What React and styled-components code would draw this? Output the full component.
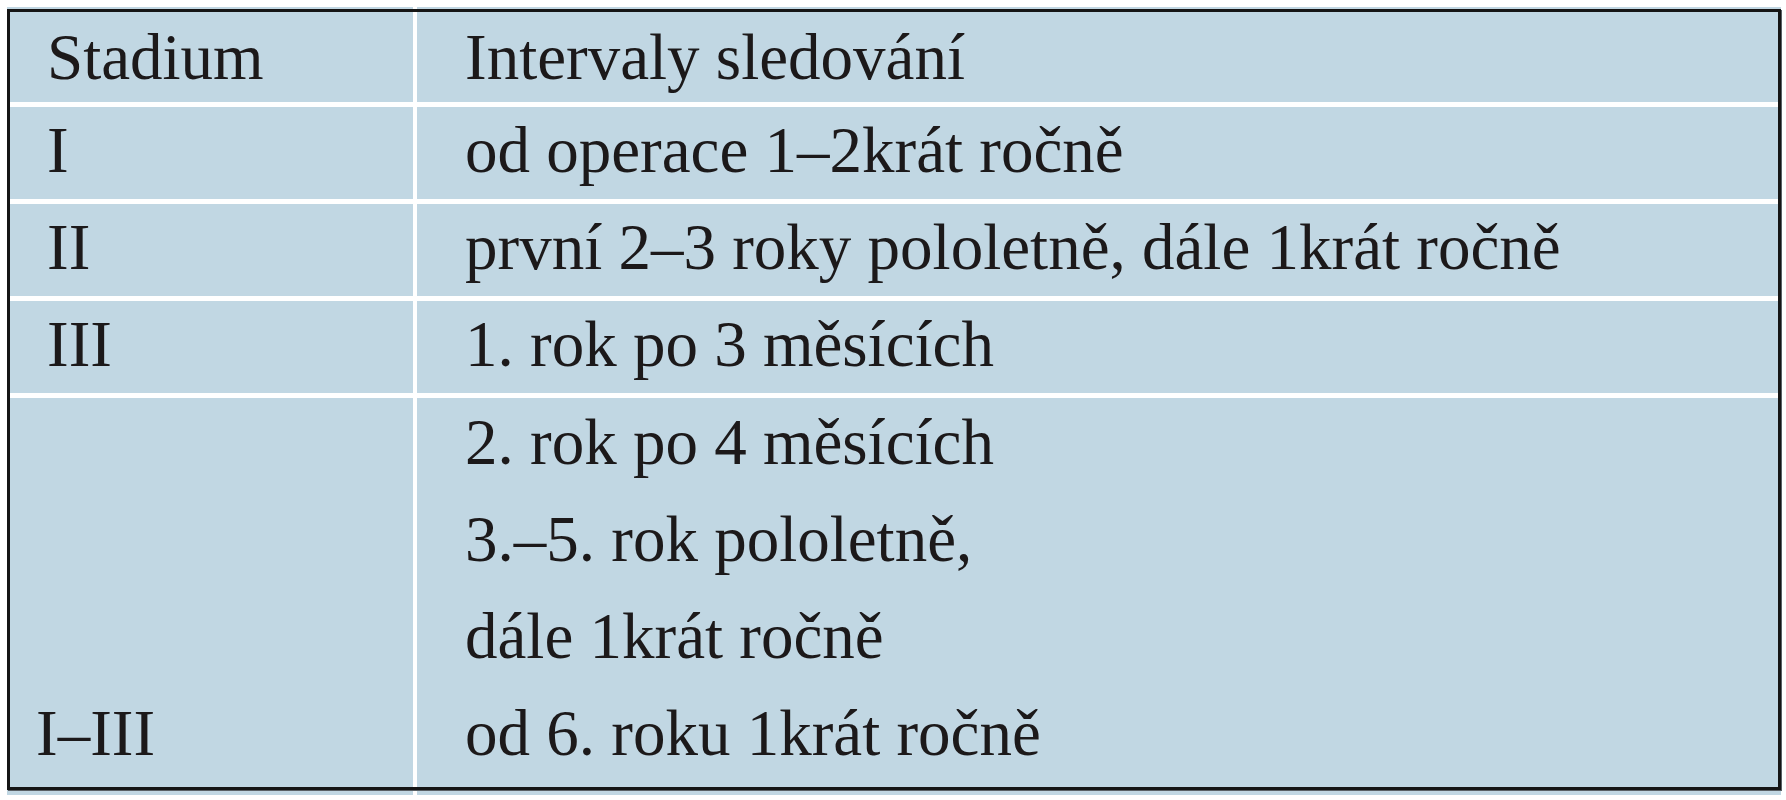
import React from 'react';
import styled, { createGlobalStyle } from 'styled-components';

const Global = createGlobalStyle`
  html, body {
    margin: 0;
    padding: 0;
    background: #ffffff;
  }
`;

const Frame = styled.div`
  margin: 7px 0 0 7px;
  width: 1774px;
  background: linear-gradient(
    to right,
    #c1d7e3 406px,
    #ffffff 406px,
    #ffffff 410px,
    #c1d7e3 410px
  );
  padding: 2px 0 5px;
`;

const Table = styled.div`
  display: grid;
  grid-template-columns: 403px 1fr;
  column-gap: 4px;
  background: #ffffff;
  border: 3px solid #151515;
  box-shadow: 1px 1px 0 #5a6166;
  font-family: "Liberation Serif", "Times New Roman", serif;
  font-size: 65px;
  line-height: 86px;
  color: #1c191a;
`;

const kinds = {
  head: { pt: 2, pb: 2, gap: 5 },
  row: { pt: 0, pb: 6, gap: 5 },
  line: { pt: 1, pb: 10, gap: 0 },
  last: { pt: 1, pb: 11, gap: 0 },
};

const Cell = styled.div`
  background: #c1d7e3;
  white-space: nowrap;
  padding: ${(p) => kinds[p.$kind].pt}px 0 ${(p) => kinds[p.$kind].pb}px
    ${(p) => (p.$side === 'left' ? p.$indent ?? 37 : 48)}px;
  margin-bottom: ${(p) => kinds[p.$kind].gap}px;
  min-height: 86px;
`;

const rows = [
  { kind: 'head', stage: 'Stadium', text: 'Intervaly sledování' },
  { kind: 'row', stage: 'I', text: 'od operace 1–2krát ročně' },
  { kind: 'row', stage: 'II', text: 'první 2–3 roky pololetně, dále 1krát ročně' },
  { kind: 'row', stage: 'III', text: '1. rok po 3 měsících' },
  { kind: 'line', stage: '', text: '2. rok po 4 měsících' },
  { kind: 'line', stage: '', text: '3.–5. rok pololetně,' },
  { kind: 'line', stage: '', text: 'dále 1krát ročně' },
  { kind: 'last', stage: 'I–III', text: 'od 6. roku 1krát ročně', indent: 26 },
];

export default function App() {
  return (
    <>
      <Global />
      <Frame>
        <Table>
          {rows.map((r, i) => (
            <React.Fragment key={i}>
              <Cell $kind={r.kind} $side="left" $indent={r.indent}>
                {r.stage}
              </Cell>
              <Cell $kind={r.kind} $side="right">
                {r.text}
              </Cell>
            </React.Fragment>
          ))}
        </Table>
      </Frame>
    </>
  );
}
